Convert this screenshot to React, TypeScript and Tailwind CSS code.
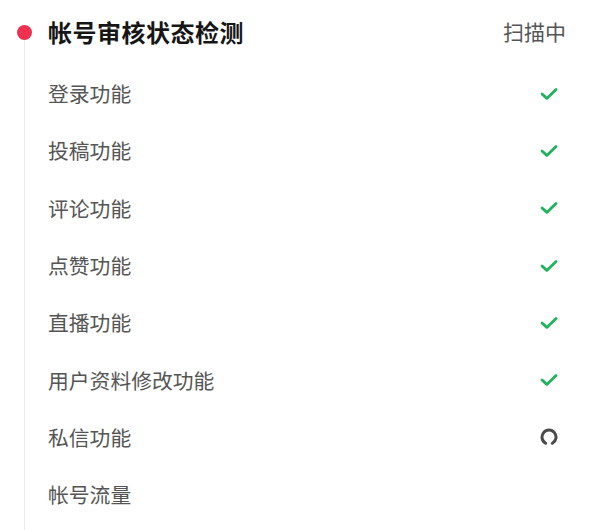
import React from 'react';

type Status = 'done' | 'loading' | 'pending';

interface CheckItem {
  label: string;
  status: Status;
}

const items: CheckItem[] = [
  { label: '登录功能', status: 'done' },
  { label: '投稿功能', status: 'done' },
  { label: '评论功能', status: 'done' },
  { label: '点赞功能', status: 'done' },
  { label: '直播功能', status: 'done' },
  { label: '用户资料修改功能', status: 'done' },
  { label: '私信功能', status: 'loading' },
  { label: '帐号流量', status: 'pending' },
];

const CheckIcon = () => (
  <svg width="18" height="14" viewBox="0 0 18 14" fill="none">
    <path
      d="M2 7l4.8 4.4L16 2.6"
      stroke="#1fb35c"
      strokeWidth="2.8"
      strokeLinecap="round"
      strokeLinejoin="round"
    />
  </svg>
);

const Spinner = () => (
  <svg width="18" height="18" viewBox="0 0 18 18" fill="none">
    <path
      d="M5.6 15.2A7 7 0 1 1 12.4 15.2"
      stroke="#4a4a4a"
      strokeWidth="3"
      strokeLinecap="round"
    />
  </svg>
);

export default function App() {
  return (
    <div
      className="w-[591px] h-[530px] bg-white overflow-hidden flex"
      style={{ fontFamily: '"Noto Sans CJK SC", "Noto Sans", sans-serif' }}
    >
      <div className="w-[48px] shrink-0 flex flex-col items-center pt-[25px] pl-[1px]">
        <div className="w-[15px] h-[15px] rounded-full bg-[#f0304e] shrink-0" />
        <div className="w-px flex-1 bg-[#ececec]" />
      </div>

      <div className="flex-1 pr-[25px]">
        <div className="h-[64px] flex items-center justify-between">
          <h2 className="text-[24px] font-bold text-[#161616] tracking-[0.5px]">帐号审核状态检测</h2>
          <span className="text-[21px] text-[#555]">扫描中</span>
        </div>

        <ul className="pt-[1px]">
          {items.map((item) => (
            <li key={item.label} className="h-[57.3px] flex items-center justify-between">
              <span className="text-[20.8px] text-[#555]">{item.label}</span>
              <span className="w-[18px] flex justify-center mr-[8px]">
                {item.status === 'done' && <CheckIcon />}
                {item.status === 'loading' && <Spinner />}
              </span>
            </li>
          ))}
        </ul>
      </div>
    </div>
  );
}
